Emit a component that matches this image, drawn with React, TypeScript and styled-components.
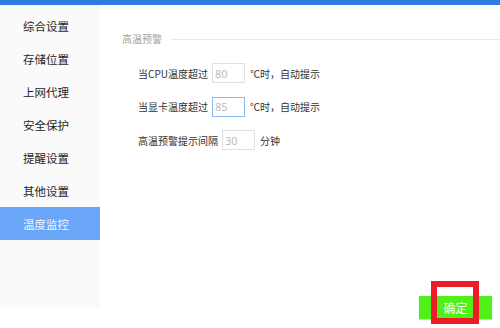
import React from 'react'
import styled, { createGlobalStyle } from 'styled-components'

const GlobalStyle = createGlobalStyle`
  html, body {
    margin: 0;
    padding: 0;
    background: #ffffff;
  }
  body {
    font-family: "Noto Sans CJK SC", "Noto Sans", sans-serif;
  }
`

const Window = styled.div`
  width: 500px;
  height: 328px;
  display: flex;
  flex-direction: column;
  overflow: hidden;
  position: relative;
`

const TopBar = styled.div`
  height: 5px;
  background: #2f7be4;
  flex-shrink: 0;
`

const Body = styled.div`
  flex: 1;
  display: flex;
  align-items: stretch;
`

const Sidebar = styled.nav`
  width: 100px;
  height: 302px;
  background: #fafafa;
  padding-top: 4px;
  box-sizing: border-box;
  flex-shrink: 0;
`

const NavItem = styled.div<{ $active?: boolean }>`
  height: 33px;
  display: flex;
  align-items: center;
  padding-left: 23px;
  font-size: 11.5px;
  color: ${({ $active }) => ($active ? '#eef5ff' : '#1f1f1f')};
  background: ${({ $active }) => ($active ? '#6aa6f7' : 'transparent')};
`

const Content = styled.section`
  flex: 1;
  display: flex;
  flex-direction: column;
  padding-top: 27px;
  padding-left: 22px;
`

const GroupHeader = styled.div`
  display: flex;
  align-items: center;
  gap: 9px;
  font-size: 10px;
  line-height: 14px;
  color: #a3a3a3;
`

const HeaderLine = styled.div`
  flex: 1;
  height: 1px;
  background: #e8e8e8;
`

const Rows = styled.div`
  display: flex;
  flex-direction: column;
  gap: 13.5px;
  padding-left: 16px;
  margin-top: 17px;
`

const Row = styled.div`
  display: flex;
  align-items: center;
  height: 20px;
  font-size: 10px;
  color: #333333;
`

const Label = styled.span`
  white-space: nowrap;
`

const NumberBox = styled.div<{ $focused?: boolean }>`
  width: 33px;
  height: 20px;
  box-sizing: border-box;
  border: 1px solid ${({ $focused }) => ($focused ? '#8bb8f2' : '#e0e0e0')};
  margin: 0 5px 0 4px;
  padding-left: 2px;
  display: flex;
  align-items: center;
  font-family: "Open Sans", "Noto Sans", sans-serif;
  font-size: 11px;
  color: #b8b8b8;
`

const Footer = styled.div`
  margin-top: auto;
  display: flex;
  justify-content: flex-end;
  padding: 0 8px 9px 0;
`

const ConfirmButton = styled.button`
  width: 73px;
  height: 23px;
  border: none;
  background: #50f01b;
  color: #ffffff;
  font-family: "Noto Sans CJK SC", sans-serif;
  font-size: 12px;
  box-shadow: 0 1px 1px rgba(80, 160, 40, 0.35);
  padding: 0;
  cursor: pointer;
`

const Highlight = styled.div`
  position: absolute;
  left: 431px;
  top: 281px;
  width: 48px;
  height: 43px;
  box-sizing: border-box;
  border: 6px solid #ee1c25;
  pointer-events: none;
`

const navItems = ['综合设置', '存储位置', '上网代理', '安全保护', '提醒设置', '其他设置', '温度监控']

const App: React.FC = () => (
  <>
    <GlobalStyle />
    <Window>
      <TopBar />
      <Body>
        <Sidebar>
          {navItems.map((name) => (
            <NavItem key={name} $active={name === '温度监控'}>
              {name}
            </NavItem>
          ))}
        </Sidebar>
        <Content>
          <GroupHeader>
            <span>高温预警</span>
            <HeaderLine />
          </GroupHeader>
          <Rows>
            <Row>
              <Label>当CPU温度超过</Label>
              <NumberBox>80</NumberBox>
              <Label>℃时，自动提示</Label>
            </Row>
            <Row>
              <Label>当显卡温度超过</Label>
              <NumberBox $focused>85</NumberBox>
              <Label>℃时，自动提示</Label>
            </Row>
            <Row>
              <Label>高温预警提示间隔</Label>
              <NumberBox>30</NumberBox>
              <Label>分钟</Label>
            </Row>
          </Rows>
          <Footer>
            <ConfirmButton>确定</ConfirmButton>
          </Footer>
        </Content>
      </Body>
      <Highlight />
    </Window>
  </>
)

export default App
